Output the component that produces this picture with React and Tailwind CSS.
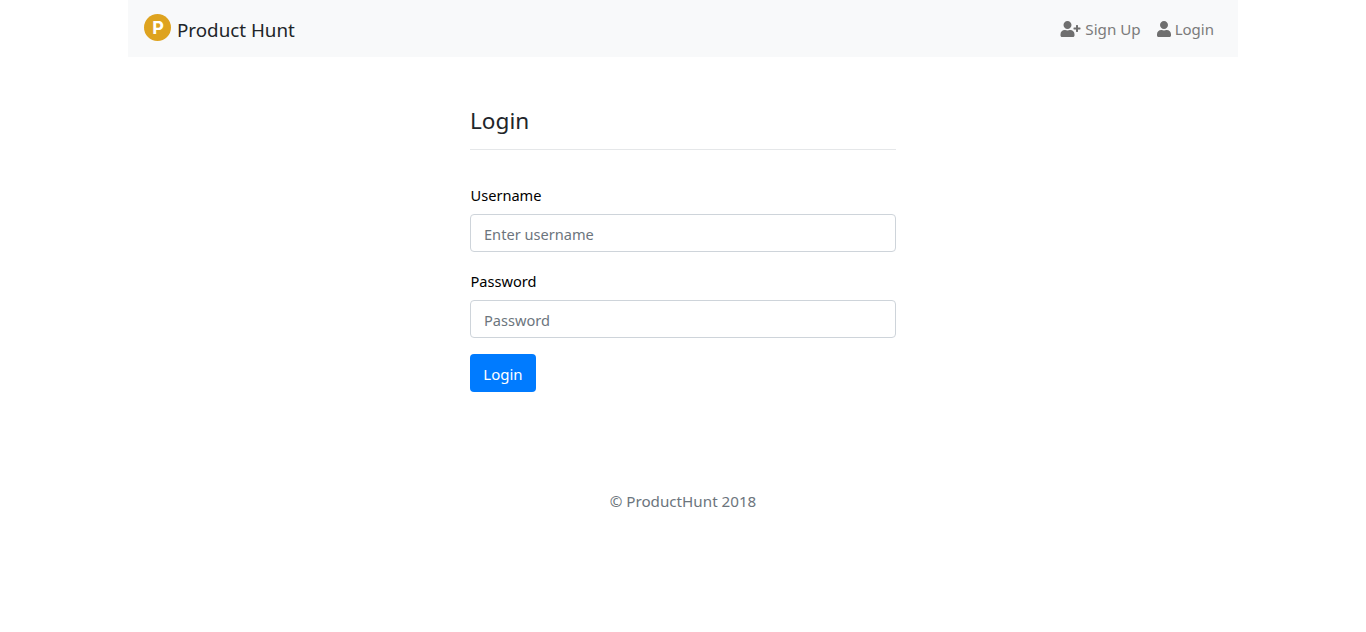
import { FaUser, FaUserPlus } from 'react-icons/fa';

const FONT = "font-['Noto_Sans',sans-serif]";

function Field({ label, placeholder, type }) {
  return (
    <div className="mb-4">
      <label className="mb-[7px] block pl-[0.5px] pt-px text-[14.6px] leading-6 text-black">{label}</label>
      <input
        type={type}
        placeholder={placeholder}
        className="block h-[38px] w-full rounded border border-[#ced4da] bg-white pl-[13px] pr-3 pt-[2px] text-[14.6px] text-[#495057] placeholder:text-[#6c757d]"
      />
    </div>
  );
}

export default function App() {
  return (
    <div className={`${FONT} min-h-[632px] bg-white text-[#212529]`}>
      <div className="mx-auto w-[1110px]">
        <nav className="flex h-[57px] items-center justify-between bg-[#f8f9fa] pl-4 pr-6 pt-1">
          <a className="flex items-center gap-[6px]">
            <span className="mb-[6px] flex h-[27px] w-[27px] items-center justify-center rounded-full bg-[#dea31f] pl-px font-['Inter',sans-serif] text-[18px] font-bold leading-none text-white">
              P
            </span>
            <span className="text-[18.8px] text-[#212529]">Product Hunt</span>
          </a>
          <div className="mb-[2px] flex items-center gap-4 text-[15px] text-[#7b7b7b]">
            <a className="flex items-center gap-1 text-[15.2px]">
              <FaUserPlus className="h-4 w-[21px] text-[#6f6f6f]" />
              Sign Up
            </a>
            <a className="flex items-center gap-1">
              <FaUser className="h-4 w-[14px] text-[#6f6f6f]" />
              Login
            </a>
          </div>
        </nav>

        <main className="mx-auto mt-[47px] w-[426px]">
          <h1 className="border-b border-[#e5e7e9] pb-[12px] pt-px text-[22.6px] leading-[32px] text-[#212529]">Login</h1>
          <form className="mt-[32px]">
            <Field label="Username" placeholder="Enter username" type="text" />
            <Field label="Password" placeholder="Password" type="password" />
            <button
              type="button"
              className="h-[38px] w-[66px] rounded bg-[#007bff] pt-[2px] text-[15px] text-white"
            >
              Login
            </button>
          </form>
        </main>

        <footer className="mt-[97px] text-center text-[15.2px] leading-6 text-[#6c757d]">© ProductHunt 2018</footer>
      </div>
    </div>
  );
}
